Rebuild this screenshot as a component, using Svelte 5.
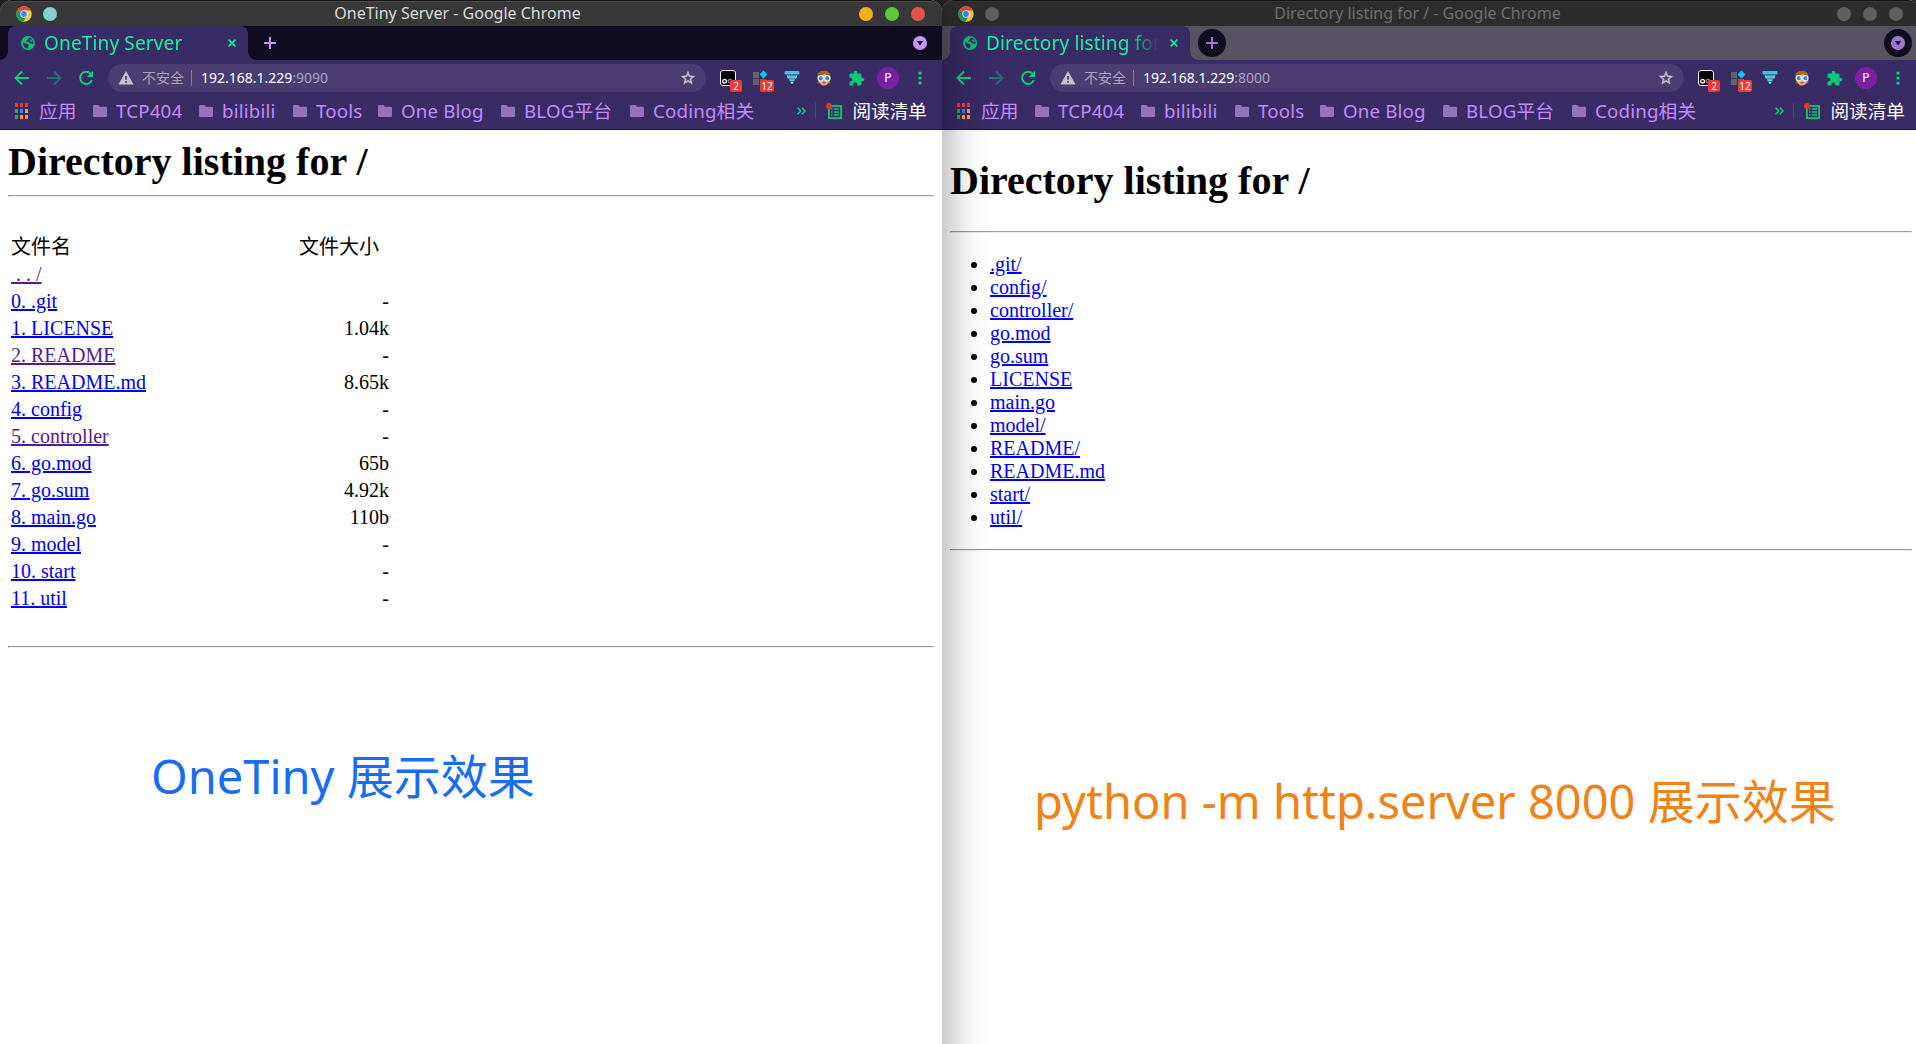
<script>
  const bookmarks = [
    { label: 'TCP404', width: 106 },
    { label: 'bilibili', width: 94 },
    { label: 'Tools', width: 85 },
    { label: 'One Blog', width: 123 },
    { label: 'BLOG平台', width: 129 },
    { label: 'Coding相关', width: 140 }
  ];

  const files = [
    { name: '0. .git', size: '-' },
    { name: '1. LICENSE', size: '1.04k' },
    { name: '2. README', size: '-', visited: true },
    { name: '3. README.md', size: '8.65k' },
    { name: '4. config', size: '-' },
    { name: '5. controller', size: '-', visited: true },
    { name: '6. go.mod', size: '65b' },
    { name: '7. go.sum', size: '4.92k' },
    { name: '8. main.go', size: '110b' },
    { name: '9. model', size: '-' },
    { name: '10. start', size: '-' },
    { name: '11. util', size: '-' }
  ];

  const entries = ['.git/', 'config/', 'controller/', 'go.mod', 'go.sum', 'LICENSE', 'main.go', 'model/', 'README/', 'README.md', 'start/', 'util/'];
  const appColors = ['#ee3a30', '#ee3a30', '#ee3a30', '#34a06a', '#2f86f6', '#f5a40c', '#34a06a', '#f5a40c', '#f5a40c'];
</script>

{#snippet chrome(title, tab, port)}
  <div class="titlebar">
    <div class="lead">
      <svg width="16" height="16" viewBox="0 0 16 16">
        <circle cx="8" cy="8" r="7.7" fill="#fccb3e" />
        <path d="M8 8 1.2 4.2A7.7 7.7 0 0 1 14.8 4.4H8z" fill="#dd4a3e" />
        <path d="M1.2 4.2A7.7 7.7 0 0 0 7.4 15.7L11 9.8 8 8z" fill="#1b9d58" />
        <circle cx="8" cy="8" r="3.7" fill="#f3f6fb" />
        <circle cx="8" cy="8" r="2.9" fill="#4285f4" />
      </svg>
      <i class="dot pin"></i>
    </div>
    <span class="title">{title}</span>
    <div class="controls">
      <i class="dot min"></i><i class="dot max"></i><i class="dot close"></i>
    </div>
  </div>
  <div class="tabs">
    <div class="tab">
      <svg width="14" height="14" viewBox="0 0 14 14">
        <circle cx="7" cy="7" r="7" fill="#07bf77" />
        <path d="M2 6.2 5.2 7.4 7.4 8.4V10.4L6.4 12.3C3.6 12 1.600 9.600 2 6.200z" fill="#382a63" />
        <path d="M8.400 1.600 6.600 3.200V4.600H5.200V5.800H7.800L9.200 7.600H10.800L12.300 8.600 12.500 6C12 3.600 10.400 2 8.400 1.600z" fill="#382a63" />
        <path d="M8.800 4.600 9.400 3.400 11 3.800 11.600 5.800 10 6z" fill="#07bf77" />
      </svg>
      <span class="tabname">{tab}</span>
      <svg class="x" width="8" height="8" viewBox="0 0 8 8"><path d="M.6.6 7.4 7.4M7.4.6.6 7.4" stroke="#12f5a2" stroke-width="1.5" /></svg>
    </div>
    <span class="round">
      <svg width="12" height="12" viewBox="0 0 12 12"><path d="M6 0V12M0 6H12" stroke="currentColor" stroke-width="2" /></svg>
    </span>
    <span class="round menu">
      <svg width="14" height="14" viewBox="0 0 14 14"><circle cx="7" cy="7" r="7" fill="currentColor" /><path d="M3.8 5H10.2L7 9.6z" fill="#100c20" /></svg>
    </span>
  </div>
  <div class="toolbar">
    <span class="cell"><svg width="16" height="16" viewBox="0 0 16 16"><path d="M15 8H2M8 1.5 1.5 8 8 14.5" fill="none" stroke="#07d080" stroke-width="1.9" /></svg></span>
    <span class="cell"><svg width="16" height="16" viewBox="0 0 16 16"><path d="M1 8H14M8 1.5 14.5 8 8 14.5" fill="none" stroke="#256f70" stroke-width="1.9" /></svg></span>
    <span class="cell"><svg width="16" height="16" viewBox="0 0 16 16"><path d="M13.9 10A6.1 6.1 0 1 1 12.6 3.6" fill="none" stroke="#07d080" stroke-width="1.9" /><path d="M15 .8V7H8.8z" fill="#07d080" /></svg></span>
    <div class="omnibox">
      <svg width="16" height="14" viewBox="0 0 16 14"><path d="M8 0 15.6 13.4H.4z" fill="#c3c1cc" /><path d="M7.2 5H8.9V8.8H7.2zM7.2 10H8.9V11.7H7.2z" fill="#4a3c70" /></svg>
      <span class="insecure">不安全</span>
      <i class="bar"></i>
      <span class="url">192.168.1.229<em>:{port}</em></span>
      <svg class="star" width="16" height="16" viewBox="0 0 24 24"><path d="M22 9.24l-7.19-.62L12 2 9.19 8.63 2 9.24l5.46 4.73L5.82 21 12 17.27 18.18 21l-1.63-7.03L22 9.24zM12 15.4l-3.76 2.27 1-4.28-3.32-2.88 4.38-.38L12 6.1l1.71 4.04 4.38.38-3.32 2.88 1 4.28L12 15.4z" fill="#c6c2cf" stroke="#c6c2cf" stroke-width=".8" /></svg>
    </div>
    <span class="cell">
      <svg width="16" height="16" viewBox="0 0 16 16"><rect x=".5" y=".5" width="15" height="15" rx="2.5" fill="#000" stroke="#f5f5f5" /><circle cx="4.6" cy="11.3" r="1.900" fill="#222" stroke="#fff" stroke-width="1.2" /><circle cx="10" cy="11.3" r="1.900" fill="#222" stroke="#8f84c0" stroke-width="1.2" /></svg>
      <b class="badge">2</b>
    </span>
    <span class="cell">
      <svg width="16" height="16" viewBox="0 0 16 16"><path d="M1 2h6V8.300H1zM1 9h6V15H1zM8 9h6V15H8z" fill="#616269" /><path d="M11.5.6 15.4 4.5 11.5 8.4 7.6 4.5z" fill="#12c4f8" /></svg>
      <b class="badge two">12</b>
    </span>
    <span class="cell"><svg width="16" height="16" viewBox="0 0 16 16"><rect x=".500" y="1" width="15" height="3.600" rx="1" fill="#2fc9e8" /><path d="M2.600 5.400H13.400L12.200 8.400H3.800z" fill="#8fe0f2" /><path d="M4 6.200H12L11.500 7.600H4.500z" fill="#22b4e0" /><path d="M5 9.200H11L10.200 11.200H5.800z" fill="#55d0ec" /><path d="M6.400 11.800H9.600L8.600 13.800H7.400z" fill="#a6ecf8" /></svg></span>
    <span class="cell"><svg width="16" height="16" viewBox="0 0 16 16"><path d="M1.600 7C1 2.600 4 .800 7 1 10-.200 14.800 1.800 14.400 7L14.200 13.500H1.800z" fill="#a8641c" /><path d="M3 9H13C13.400 13.600 10.400 15.600 8 15.600S2.600 13.600 3 9z" fill="#e9a67b" /><path d="M4 5.600 9 4.200 12.600 5.800V8H4z" fill="#e9b088" /><circle cx="4.700" cy="8.300" r="2.600" fill="#1d8be0" stroke="#e8f4fc" stroke-width="1.200" /><circle cx="11.300" cy="8.300" r="2.600" fill="#1d8be0" stroke="#e8f4fc" stroke-width="1.200" /><path d="M6.200 12.800H9.800" stroke="#9a4a30" /></svg></span>
    <span class="cell"><svg width="17" height="17" viewBox="0 0 24 24"><path d="M20.5 11H19V7c0-1.1-.9-2-2-2h-4V3.5C13 2.12 11.880 1 10.500 1S8 2.120 8 3.500V5H4c-1.100 0-1.990.9-1.990 2v3.800H3.500c1.490 0 2.700 1.210 2.700 2.700s-1.210 2.700-2.700 2.700H2V20c0 1.100.9 2 2 2h3.800v-1.500c0-1.490 1.210-2.700 2.700-2.700 1.490 0 2.700 1.210 2.700 2.700V22H17c1.100 0 2-.9 2-2v-4h1.500c1.380 0 2.500-1.120 2.500-2.500S21.880 11 20.500 11z" fill="#07c877" /></svg></span>
    <span class="cell"><b class="avatar">P</b></span>
    <span class="cell"><svg width="4" height="14" viewBox="0 0 4 14"><path d="M.5.8h3v2.800h-3zM.5 5.800h3v2.800h-3zM.5 10.800h3v2.800h-3z" fill="#07d080" /></svg></span>
  </div>
  <div class="bookmarks">
    <span class="apps">
      {#each appColors as color}<i style:background={color}></i>{/each}
    </span>
    <span class="applabel">应用</span>
    {#each bookmarks as mark}
      <span class="mark" style:width="{mark.width}px">
        <svg width="14" height="12" viewBox="0 0 14 12"><path d="M1.300 0H5.500L7 1.700H12.700A1.300 1.300 0 0 1 14 3V10.700A1.300 1.300 0 0 1 12.700 12H1.300A1.300 1.300 0 0 1 0 10.700V1.300A1.300 1.300 0 0 1 1.300 0z" fill="#9671bd" /></svg>
        {mark.label}
      </span>
    {/each}
    <span class="reading">
      <svg width="9" height="8" viewBox="0 0 9 8"><path d="M.6.8 3.600 4 .6 7.200M5 .8 8 4 5 7.200" fill="none" stroke="#07d080" stroke-width="1.600" /></svg>
      <i class="sep"></i>
      <svg class="list" width="16" height="16" viewBox="0 0 16 16"><rect x="2.900" y="2.900" width="12.200" height="12.200" fill="none" stroke="#07c877" stroke-width="1.800" /><path d="M5 6h1.500M5 9h1.500M5 12h1.500M7.800 6H13M7.800 9H13M7.800 12H13" stroke="#07c877" stroke-width="1.500" /><circle cx="3" cy="3" r="3" fill="#dc352c" /></svg>
      <span>阅读清单</span>
    </span>
  </div>
{/snippet}

<main class="desktop">
  <section class="window active">
    {@render chrome('OneTiny Server - Google Chrome', 'OneTiny Server', '9090')}
    <article class="page tiny">
      <h1>Directory listing for /</h1>
      <hr />
      <div class="table">
        <div class="row head"><span>文件名</span><span class="sizehead">文件大小</span></div>
        <div class="row"><span class="link visited">&nbsp;. . /</span></div>
        {#each files as file}
          <div class="row"><span class="link" class:visited={file.visited}>{file.name}</span><span>{file.size}</span></div>
        {/each}
      </div>
      <hr />
      <p class="note blue">OneTiny 展示效果</p>
    </article>
  </section>
  <section class="window inactive">
    {@render chrome('Directory listing for / - Google Chrome', 'Directory listing for /', '8000')}
    <article class="page python">
      <h1>Directory listing for /</h1>
      <hr />
      <ul>
        {#each entries as entry}<li><span class="link">{entry}</span></li>{/each}
      </ul>
      <hr />
      <p class="note orange">python -m http.server 8000 展示效果</p>
    </article>
  </section>
</main>

<style>
  :global(body) { margin: 0; overflow: hidden; }
  .desktop {
    display: flex; width: 1916px; height: 1044px; overflow: hidden; background: #2b2023;
    font-family: 'Noto Sans', 'Noto Sans CJK SC', sans-serif;
  }
  .window { display: flex; flex-direction: column; flex: none; height: 1120px; border-radius: 12px 12px 0 0; background: #fff; }
  .active { width: 942px; position: relative; z-index: 1; box-shadow: 0 0 46px rgba(0, 0, 0, .42); }
  .inactive { width: 978px; }
  svg { display: block; flex: none; }
  i { display: block; flex: none; }

  .titlebar {
    box-sizing: border-box; height: 26px; flex: none; display: flex; align-items: center; justify-content: space-between;
    padding: 1px 17px 0 16px; border-top: 1px solid #181315; border-radius: 12px 12px 0 0;
    background: #373737; box-shadow: inset 0 1px #4b4a4b;
  }
  .inactive .titlebar { background: #2c2c2c; box-shadow: inset 0 1px #353435; }
  .lead { display: flex; gap: 11px; align-items: center; width: 66px; }
  .controls { display: flex; gap: 12px; width: 66px; justify-content: flex-end; }
  .title { font-size: 16px; line-height: 24px; color: #dcdcdc; margin-right: 26px; padding-bottom: 3px; }
  .inactive .title { color: #6e6e6e; }
  .dot { width: 14px; height: 14px; border-radius: 50%; }
  .pin { background: #7ed3ca; }
  .min { background: #f2ae1c; }
  .max { background: #5aca36; }
  .close { background: #e9524a; }
  .inactive .dot { background: #5f5f5f; }

  .tabs { height: 34px; flex: none; display: flex; align-items: center; padding-left: 8px; background: #100c20; }
  .inactive .tabs { background: #565261; }
  .tab {
    position: relative; box-sizing: border-box; width: 240px; height: 34px; display: flex; align-items: center;
    padding: 0 12px 0 13px; background: #382a63; border-radius: 8px 8px 0 0;
  }
  .tab::before, .tab::after { content: ''; position: absolute; bottom: 0; width: 8px; height: 8px; }
  .tab::before { left: -8px; background: radial-gradient(circle at 0 0, transparent 7.5px, #382a63 8px); }
  .tab::after { right: -8px; background: radial-gradient(circle at 100% 0, transparent 7.5px, #382a63 8px); }
  .tabname {
    width: 174px; margin-left: 9px; overflow: hidden; white-space: nowrap; font-size: 19px; line-height: 30px; letter-spacing: .15px; color: #12f5a2;
    mask-image: linear-gradient(to right, #000 140px, transparent 174px);
  }
  .x { margin-left: auto; }
  .round { width: 28px; height: 28px; margin-left: 8px; display: grid; place-items: center; border-radius: 50%; color: #c795fb; }
  .inactive .round { background: #100c20; color: #a274d6; }
  .menu { margin-left: auto; margin-right: 8px; }

  .toolbar { height: 36px; flex: none; display: flex; align-items: center; padding: 0 6px; background: #382a63; }
  .cell { width: 32px; height: 28px; flex: none; display: grid; place-items: center; position: relative; }
  .omnibox {
    box-sizing: border-box; height: 28px; flex: 1; margin: 0 6px; padding: 0 10px; border-radius: 14px; background: #4a3c70;
    display: flex; align-items: center; font-size: 14px; line-height: 20px;
  }
  .insecure { color: #aaa4b9; margin-left: 8px; width: 42px; white-space: nowrap; }
  .bar { width: 1px; height: 16px; margin: 0 9px 0 7px; background: #857b9e; }
  .url { color: #fff; }
  .url em { font-style: normal; color: #aaa4b9; }
  .star { margin-left: auto; }
  .badge {
    position: absolute; left: 18px; top: 16px; min-width: 12px; height: 12px; border-radius: 2px; text-align: center;
    background: #ef3a35; color: #fff; font-size: 10px; line-height: 12px; font-weight: 400;
  }
  .badge.two { left: 16px; min-width: 14px; }
  .avatar { width: 22px; height: 22px; border-radius: 50%; background: #7b1fa2; color: #fff; font-size: 12px; line-height: 22px; text-align: center; font-weight: 400; }

  .bookmarks {
    box-sizing: border-box; height: 34px; flex: none; display: flex; align-items: center; padding: 0 15px 3px;
    background: #382a63; border-bottom: 1px solid #211744; color: #c48cfb; font-size: 18.67px; line-height: 30px; white-space: nowrap;
  }
  .apps { display: grid; grid-template-columns: repeat(3, 4px); gap: 1px; row-gap: 2px; margin-right: 10px; }
  .apps i { height: 4px; width: 3px; }
  .applabel { width: 54px; }
  .mark { display: flex; align-items: center; gap: 9px; flex: none; letter-spacing: .2px; }
  .reading { display: flex; align-items: center; margin-left: auto; color: #fff; }
  .sep { width: 1px; height: 16px; margin: 0 10px 0 9px; background: #2b5670; }
  .list { margin-right: 10px; }

  .page { position: relative; flex: 1; padding: 9px 8px 8px; font-family: 'Liberation Serif', 'Noto Sans CJK SC', serif; font-size: 20px; color: #000; }
  h1 { font-size: 40px; line-height: 46px; margin: 0; font-weight: 700; }
  hr { margin: 10px 0; }
  .table { width: 378px; margin: 37px 0 34px; padding-left: 3px; }
  .row { height: 27px; line-height: 27px; display: flex; justify-content: space-between; }
  .sizehead { margin-right: 10px; }
  .link { color: #0000ee; text-decoration: underline; }
  .visited { color: #551a8b; }
  .python { padding-top: 28px; }
  .python hr { margin: 27px 0 20px; }
  .python ul + hr { margin-top: 20px; }
  ul { margin: 0; padding-left: 40px; }
  li { line-height: 23px; }
  .note { position: absolute; margin: 0; font: 47px/64px 'Noto Sans', 'Noto Sans CJK SC', sans-serif; white-space: nowrap; }
  .blue { left: 151px; top: 614px; color: #1a6cf0; }
  .orange { left: 92px; top: 639px; color: #ee8419; }
</style>
